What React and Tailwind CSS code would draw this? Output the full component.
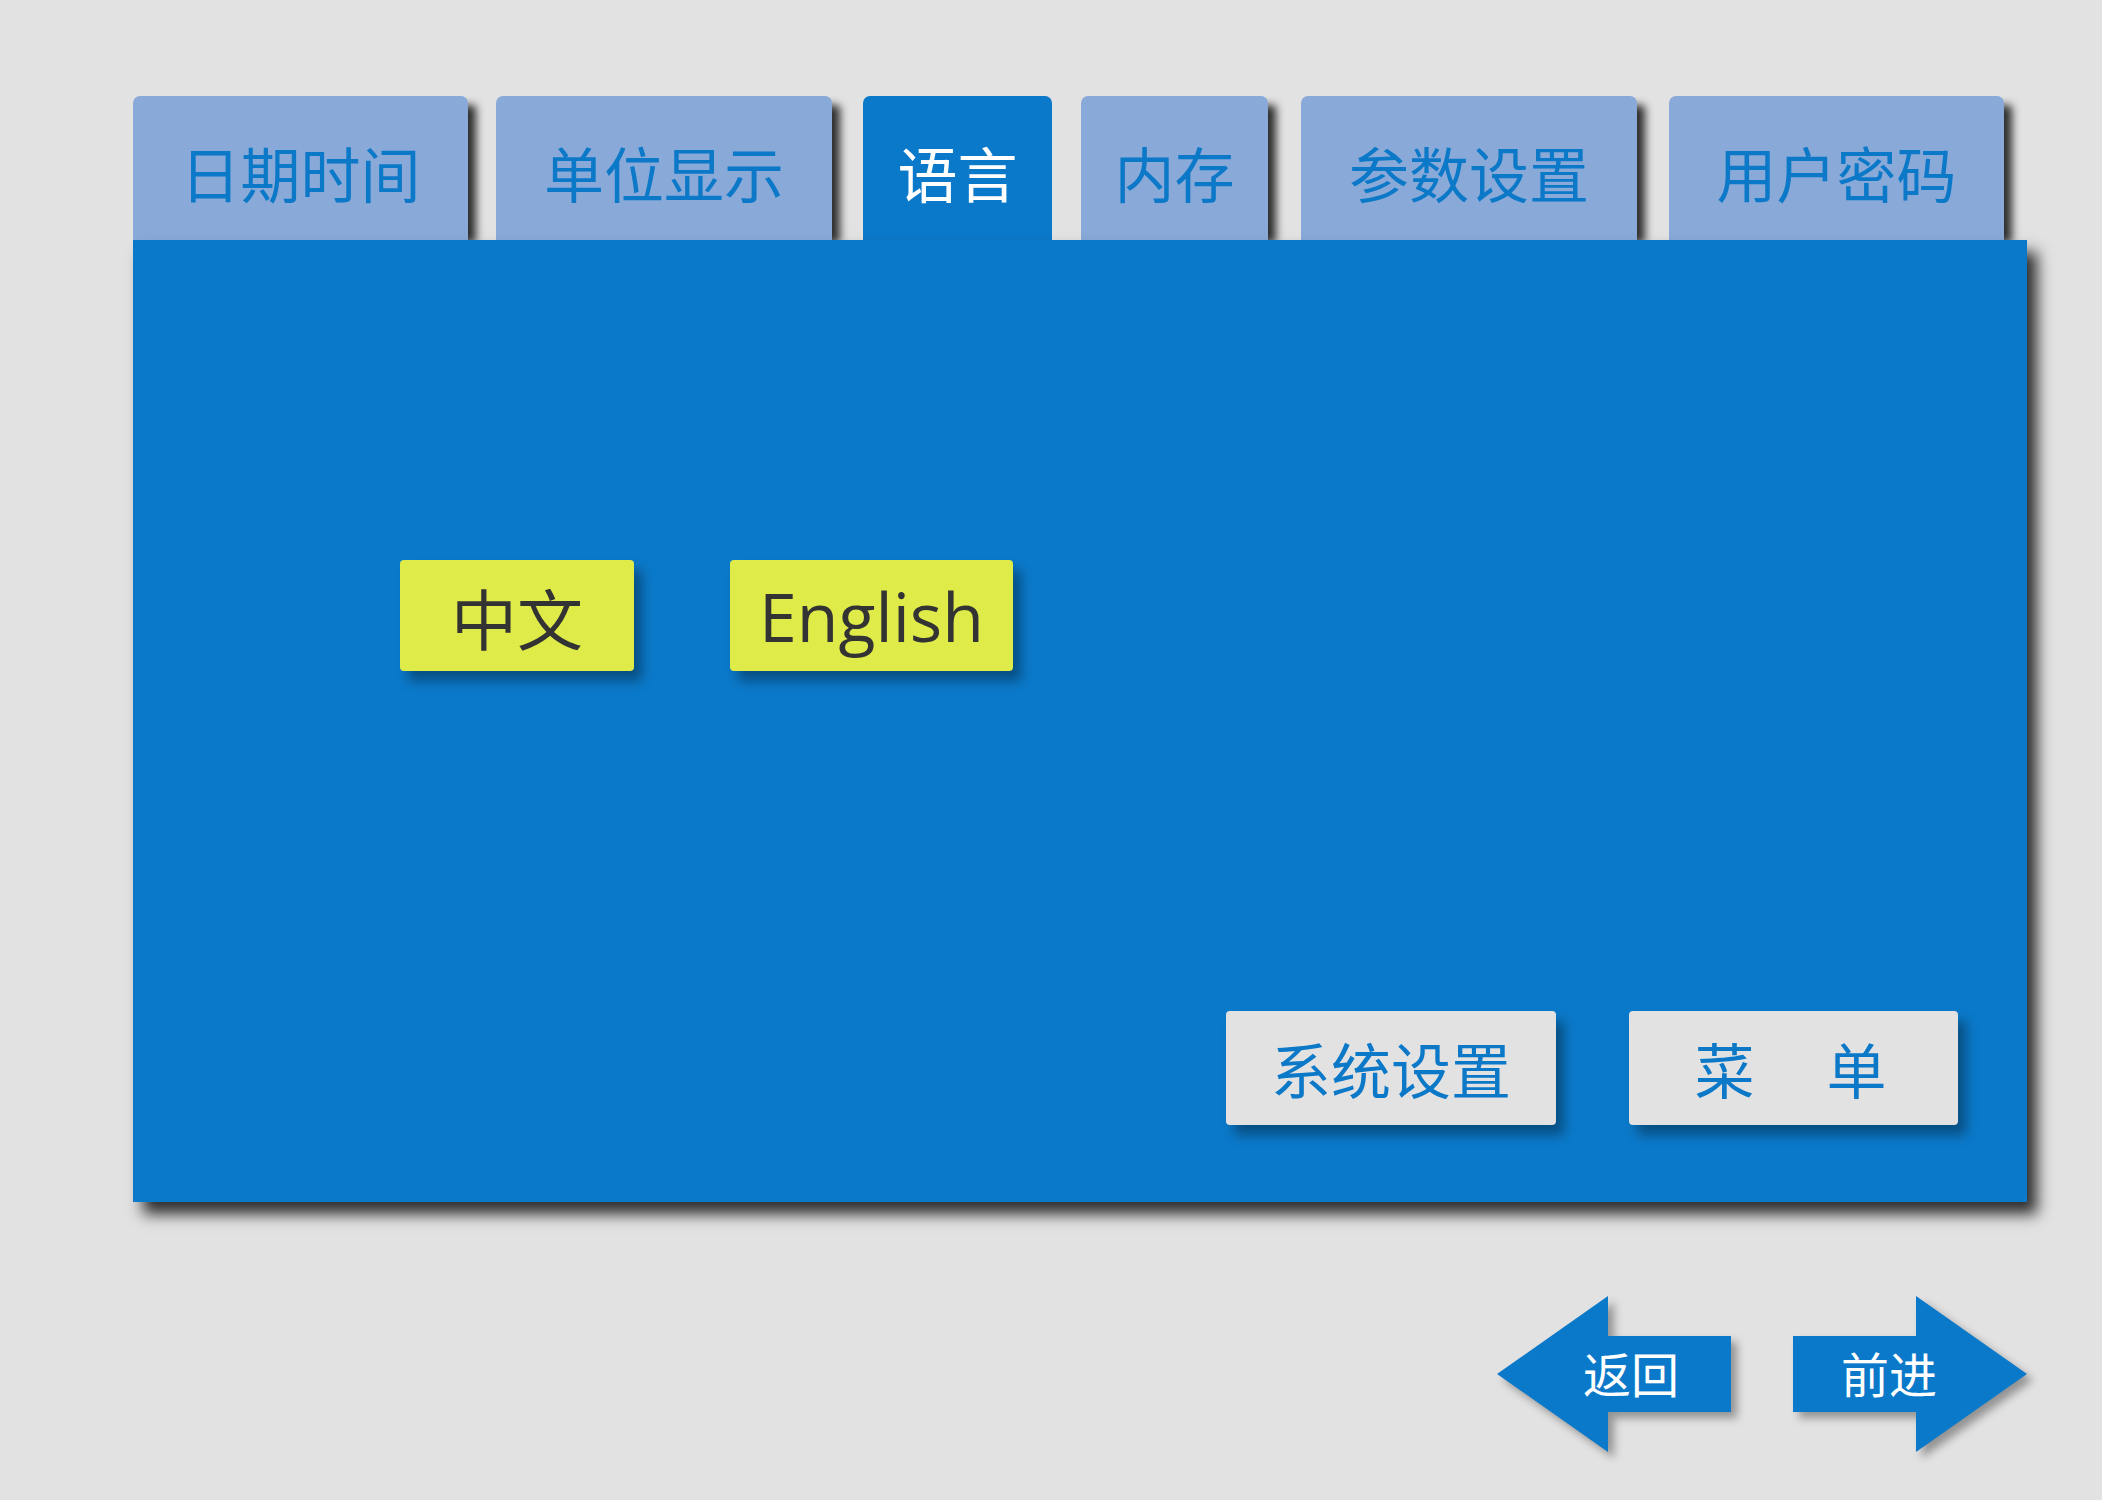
import { useState } from 'react';

const cjk = { fontFamily: '"Noto Sans CJK SC", "Noto Sans", sans-serif' };

const tabs = [
  { label: '日期时间', w: 'w-[335px]', ml: 'ml-0' },
  { label: '单位显示', w: 'w-[336px]', ml: 'ml-[28px]' },
  { label: '语言', w: 'w-[189px]', ml: 'ml-[31px]' },
  { label: '内存', w: 'w-[187px]', ml: 'ml-[29px]' },
  { label: '参数设置', w: 'w-[336px]', ml: 'ml-[33px]' },
  { label: '用户密码', w: 'w-[335px]', ml: 'ml-[32px]' },
];

function Arrow({ dir, label }) {
  const left = dir === 'left';
  const points = left
    ? '0,78 111,0 111,40 234,40 234,116 111,116 111,156'
    : '0,40 123,40 123,0 234,78 123,156 123,116 0,116';
  return (
    <button className="relative w-[234px] h-[156px]">
      <svg
        width="234"
        height="156"
        viewBox="0 0 234 156"
        className="absolute inset-0 drop-shadow-[6px_6px_4px_rgba(0,0,0,0.35)]"
      >
        <polygon points={points} fill="#0b79c9" />
      </svg>
      <span
        className={`absolute inset-0 flex items-center text-white text-[48px] leading-none pb-[4px] ${
          left ? 'pl-[86px]' : 'pl-[48px]'
        }`}
        style={cjk}
      >
        {label}
      </span>
    </button>
  );
}

export default function App() {
  const [active, setActive] = useState(2);

  return (
    <div className="min-h-[1500px] bg-[#e2e2e2] pl-[133px] pt-[96px]" style={cjk}>
      <div className="flex h-[144px]">
        {tabs.map((t, i) => (
          <button
            key={t.label}
            onClick={() => setActive(i)}
            className={`${t.w} ${t.ml} h-full rounded-t-[7px] pt-[8px] text-[60px] leading-none flex items-center justify-center ${
              i === active
                ? 'bg-[#0b79c9] text-white'
                : 'bg-[#89aad9] text-[#0b78c8] shadow-[11px_6px_8px_-3px_rgba(0,0,0,0.8)]'
            }`}
          >
            {t.label}
          </button>
        ))}
      </div>

      <div className="relative w-[1894px] h-[962px] bg-[#0b79c9] shadow-[10px_12px_14px_rgba(0,0,0,0.8)] flex flex-col">
        <div className="flex pl-[267px] pt-[320px] gap-[96px]">
          <button className="w-[234px] h-[111px] rounded-[4px] bg-[#dfeb48] text-[#333333] text-[66px] leading-none flex items-center justify-center shadow-[8px_10px_12px_rgba(0,0,0,0.35)]">
            中文
          </button>
          <button
            className="w-[283px] h-[111px] rounded-[4px] bg-[#dfeb48] text-[#333333] text-[68px] leading-none flex items-center justify-center shadow-[8px_10px_12px_rgba(0,0,0,0.35)]"
            style={{ fontFamily: '"Open Sans", "Noto Sans", sans-serif' }}
          >
            English
          </button>
        </div>

        <div className="mt-auto flex justify-end gap-[73px] pr-[69px] pb-[77px]">
          <button className="w-[330px] h-[114px] rounded-[4px] bg-[#e2e2e2] text-[#0b78c8] text-[60px] leading-none flex items-center justify-center shadow-[8px_10px_12px_rgba(0,0,0,0.35)]">
            系统设置
          </button>
          <button className="w-[329px] h-[114px] rounded-[4px] bg-[#e2e2e2] text-[#0b78c8] text-[60px] leading-none tracking-[6px] flex items-center justify-center shadow-[8px_10px_12px_rgba(0,0,0,0.35)]">
            菜　单
          </button>
        </div>
      </div>

      <div className="w-[1894px] flex justify-end gap-[62px] mt-[94px]">
        <Arrow dir="left" label="返回" />
        <Arrow dir="right" label="前进" />
      </div>
    </div>
  );
}
